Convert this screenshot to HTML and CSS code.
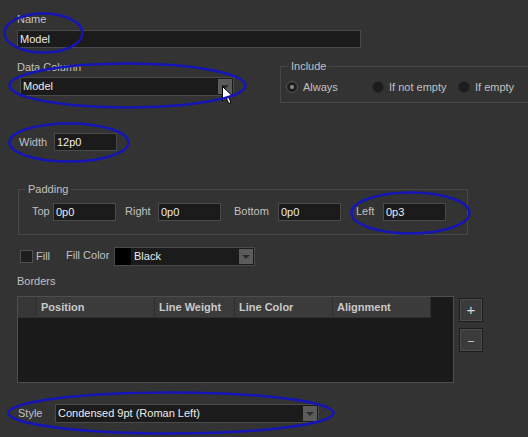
FILE: index.html
```html
<!DOCTYPE html>
<html>
<head>
<meta charset="utf-8">
<link rel="stylesheet" href="styles.css">
</head>
<body>
<div class="page">
  <div class="label">Name</div>
  <div class="input name-input">Model</div>

  <div class="row2">
    <div class="left-col">
      <div class="label dc-label">Data Column</div>
      <div class="select dc-select">
        <div class="select-text">Model</div>
        <div class="select-btn"><span class="tri"></span></div>
      </div>
      <div class="width-row">
        <div class="width-label">Width</div>
        <div class="input short">12p0</div>
      </div>
    </div>
    <div class="group include">
      <div class="group-title">Include</div>
      <div class="radios">
        <div class="radio-item"><span class="radio on"></span>Always</div>
        <div class="radio-item"><span class="radio"></span>If not empty</div>
        <div class="radio-item"><span class="radio"></span>If empty</div>
      </div>
    </div>
  </div>

  <div class="group padding-group">
    <div class="group-title pad-title">Padding</div>
    <div class="pad-row">
      <div class="pad-label l-top">Top</div>
      <div class="input short">0p0</div>
      <div class="pad-label l-right">Right</div>
      <div class="input short">0p0</div>
      <div class="pad-label l-bottom">Bottom</div>
      <div class="input short">0p0</div>
      <div class="pad-label l-left">Left</div>
      <div class="input short">0p3</div>
    </div>
  </div>

  <div class="fill-row">
    <span class="checkbox"></span>
    <div class="fill-label">Fill</div>
    <div class="fillcolor-label">Fill Color</div>
    <div class="select fill-select">
      <span class="swatch"></span>
      <div class="select-text">Black</div>
      <div class="select-btn"><span class="tri"></span></div>
    </div>
  </div>

  <div class="label borders-label">Borders</div>
  <div class="table-row">
    <div class="table">
      <div class="thead">
        <div class="th th-corner"></div>
        <div class="th th-pos">Position</div>
        <div class="th th-weight">Line Weight</div>
        <div class="th th-color">Line Color</div>
        <div class="th th-align">Alignment</div>
      </div>
    </div>
    <div class="buttons">
      <div class="btn">+</div>
      <div class="btn btn-minus">&#8211;</div>
    </div>
  </div>

  <div class="style-row">
    <div class="style-label">Style</div>
    <div class="select style-select">
      <div class="select-text">Condensed 9pt (Roman Left)</div>
      <div class="select-btn"><span class="tri"></span></div>
    </div>
  </div>
</div>

<svg class="cursor" width="14" height="20" viewBox="0 0 14 20">
  <path d="M0.5 0.5 L0.5 15 L4 11.5 L6.8 17.5 L9 16.5 L6.3 10.5 L11 10.5 Z" fill="#fff" stroke="#000" stroke-width="1"/>
</svg>

<svg class="marks" width="528" height="437" viewBox="0 0 528 437">
  <ellipse cx="43.5" cy="33" rx="39" ry="19.5"/>
  <ellipse cx="127.5" cy="85.5" rx="118" ry="22"/>
  <ellipse cx="69" cy="142.5" rx="59.5" ry="19"/>
  <ellipse cx="410.5" cy="213" rx="59" ry="20.5"/>
  <ellipse cx="171" cy="413" rx="162.5" ry="20.5"/>
</svg>
</body>
</html>
```

FILE: styles.css
```css
html, body {
  margin: 0;
  background: #333333;
}
body {
  width: 528px;
  height: 437px;
  overflow: hidden;
  position: relative;
  font-family: "Liberation Sans", Arial, sans-serif;
  font-size: 11px;
  color: #c0c0c0;
}
.page {
  padding: 13px 0 0 17px;
}
.label {
  display: block;
  line-height: 13px;
}
.input {
  box-sizing: border-box;
  height: 18px;
  background: #1b1b1b;
  border: 1px solid #4a4a4a;
  color: #ececec;
  line-height: 16px;
  padding: 0 2px;
  white-space: nowrap;
}
.name-input {
  width: 344px;
  margin-top: 4px;
}
.short {
  width: 63px;
  flex: none;
}

/* select */
.select {
  display: flex;
  box-sizing: border-box;
  height: 19px;
  background: #1b1b1b;
  border: 1px solid #4a4a4a;
  color: #ececec;
}
.select-text {
  flex: 1;
  padding-left: 2px;
  line-height: 17px;
  white-space: nowrap;
}
.select-btn {
  width: 14px;
  margin: 1px;
  background: #5b5b5b;
  display: flex;
  align-items: center;
  justify-content: center;
}
.tri {
  width: 0;
  height: 0;
  border-left: 4px solid transparent;
  border-right: 4px solid transparent;
  border-top: 4px solid #2c2c2c;
}

/* row 2 */
.row2 {
  display: flex;
  align-items: flex-start;
  margin-top: 12px;
}
.left-col {
  width: 263px;
  flex: none;
}
.dc-label {
  padding-top: 1px;
}
.dc-select {
  width: 214px;
  margin: 3px 0 0 3px;
}
.width-row {
  display: flex;
  align-items: center;
  margin-top: 37px;
}
.width-label {
  width: 35px;
  margin-left: 2px;
}

/* groups */
.group {
  box-sizing: border-box;
  border: 1px solid #474747;
}
.group-title {
  width: fit-content;
  line-height: 13px;
  margin: -7px 0 0 7px;
  padding: 0 3px;
  background: #333333;
}
.include {
  width: 260px;
  flex: none;
  margin-top: 6px;
}
.radios {
  display: flex;
  align-items: center;
  height: 14px;
  margin-top: 7px;
  padding: 0 0 8px 5px;
}
.radio-item {
  width: 86px;
  flex: none;
  display: flex;
  align-items: center;
  white-space: nowrap;
}
.radio {
  width: 12px;
  height: 12px;
  box-sizing: border-box;
  border-radius: 50%;
  background: #1c1c1c;
  border: 1px solid #2a2a2a;
  margin-right: 5px;
  display: flex;
  align-items: center;
  justify-content: center;
  flex: none;
}
.radio.on {
  border-color: #555555;
  background: #1e1e1e;
}
.radio.on::after {
  content: "";
  width: 4px;
  height: 4px;
  border-radius: 50%;
  background: #8a8a8a;
}

/* padding group */
.padding-group {
  width: 450px;
  margin: 38px 0 0 1px;
}
.pad-title {
  margin-left: 6px;
}
.pad-row {
  display: flex;
  align-items: center;
  margin-top: 7px;
  padding: 0 0 13px 13px;
}
.pad-label {
  flex: none;
  line-height: 13px;
  padding-bottom: 2px;
}
.l-top { width: 21px; }
.l-right { width: 33px; margin-left: 9px; }
.l-bottom { width: 44px; margin-left: 13px; }
.l-left { width: 27px; margin-left: 15px; }

/* fill row */
.fill-row {
  display: flex;
  align-items: center;
  height: 19px;
  margin-top: 12px;
}
.checkbox {
  width: 13px;
  height: 13px;
  box-sizing: border-box;
  border: 1px solid #505050;
  background: #1e1e1e;
  margin-left: 3px;
  flex: none;
}
.fill-label {
  width: 30px;
  margin-left: 3px;
  padding-bottom: 1px;
}
.fillcolor-label {
  width: 48px;
  padding-bottom: 3px;
}
.fill-select {
  width: 141px;
}
.swatch {
  width: 16px;
  margin: 0 1px 0 0;
  background: #000000;
  flex: none;
}
.fill-select .select-text {
  padding-left: 2px;
}

/* borders table */
.borders-label {
  margin-top: 9px;
}
.table-row {
  display: flex;
  align-items: flex-start;
  margin-top: 8px;
}
.table {
  box-sizing: border-box;
  width: 437px;
  height: 87px;
  border: 1px solid #4e4e4e;
  background: #1a1a1a;
}
.thead {
  display: flex;
  height: 21px;
}
.th {
  box-sizing: border-box;
  background: #3b3b3b;
  border-right: 1px solid #2f2f2f;
  border-bottom: 1px solid #303030;
  color: #c9c9c9;
  font-weight: bold;
  line-height: 20px;
  padding-left: 4px;
  white-space: nowrap;
  overflow: hidden;
}
.th-corner { width: 19px; padding: 0; background: #373737; }
.th-pos { width: 118px; }
.th-weight { width: 80px; }
.th-color { width: 98px; }
.th-align { width: 98px; }

.buttons {
  margin: 2px 0 0 5px;
}
.btn {
  box-sizing: border-box;
  width: 24px;
  height: 24px;
  border: 1px solid #1d1d1d;
  box-shadow: inset 0 0 0 1px #4c4c4c;
  background: #3b3b3b;
  color: #d8d8d8;
  font-size: 15px;
  line-height: 22px;
  text-align: center;
}
.btn-minus {
  margin-top: 6px;
  font-size: 11px;
}

/* style row */
.style-row {
  display: flex;
  align-items: center;
  margin-top: 21px;
}
.style-label {
  width: 37px;
  margin-left: 1px;
  padding-bottom: 1px;
}
.style-select {
  width: 264px;
}

/* overlays */
.cursor {
  position: absolute;
  left: 222px;
  top: 86px;
}
.marks {
  position: absolute;
  left: 0;
  top: 0;
  pointer-events: none;
}
.marks ellipse {
  fill: none;
  stroke: #1515b8;
  stroke-width: 2.5;
}
```
